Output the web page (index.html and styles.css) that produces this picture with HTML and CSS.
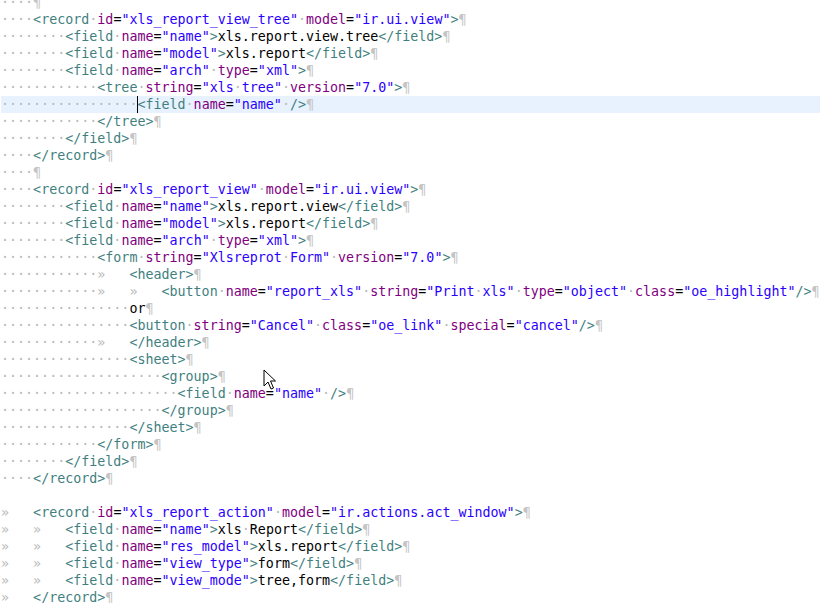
FILE: index.html
```html
<!DOCTYPE html>
<html>
<head>
<meta charset="utf-8">
<link rel="stylesheet" href="styles.css">
</head>
<body>
<div class="editor">
<div class="code">
<div class="ln"><span class="w">····</span><span class="p">¶</span></div>
<div class="ln"><span class="w">····</span><span class="t">&lt;record</span><span class="w">·</span><span class="a">id</span>=<span class="v">"xls_report_view_tree"</span><span class="w">·</span><span class="a">model</span>=<span class="v">"ir.ui.view"</span><span class="t">&gt;</span><span class="p">¶</span></div>
<div class="ln"><span class="w">········</span><span class="t">&lt;field</span><span class="w">·</span><span class="a">name</span>=<span class="v">"name"</span><span class="t">&gt;</span>xls.report.view.tree<span class="t">&lt;/field&gt;</span><span class="p">¶</span></div>
<div class="ln"><span class="w">········</span><span class="t">&lt;field</span><span class="w">·</span><span class="a">name</span>=<span class="v">"model"</span><span class="t">&gt;</span>xls.report<span class="t">&lt;/field&gt;</span><span class="p">¶</span></div>
<div class="ln"><span class="w">········</span><span class="t">&lt;field</span><span class="w">·</span><span class="a">name</span>=<span class="v">"arch"</span><span class="w">·</span><span class="a">type</span>=<span class="v">"xml"</span><span class="t">&gt;</span><span class="p">¶</span></div>
<div class="ln"><span class="w">············</span><span class="t">&lt;tree</span><span class="w">·</span><span class="a">string</span>=<span class="v">"xls<span class="w">·</span>tree"</span><span class="w">·</span><span class="a">version</span>=<span class="v">"7.0"</span><span class="t">&gt;</span><span class="p">¶</span></div>
<div class="ln cur"><span class="w">·················</span><span class="caret"></span><span class="t">&lt;field</span><span class="w">·</span><span class="a">name</span>=<span class="v">"name"</span><span class="w">·</span><span class="t">/&gt;</span><span class="p">¶</span></div>
<div class="ln"><span class="w">············</span><span class="t">&lt;/tree&gt;</span><span class="p">¶</span></div>
<div class="ln"><span class="w">········</span><span class="t">&lt;/field&gt;</span><span class="p">¶</span></div>
<div class="ln"><span class="w">····</span><span class="t">&lt;/record&gt;</span><span class="p">¶</span></div>
<div class="ln"><span class="w">····</span><span class="p">¶</span></div>
<div class="ln"><span class="w">····</span><span class="t">&lt;record</span><span class="w">·</span><span class="a">id</span>=<span class="v">"xls_report_view"</span><span class="w">·</span><span class="a">model</span>=<span class="v">"ir.ui.view"</span><span class="t">&gt;</span><span class="p">¶</span></div>
<div class="ln"><span class="w">········</span><span class="t">&lt;field</span><span class="w">·</span><span class="a">name</span>=<span class="v">"name"</span><span class="t">&gt;</span>xls.report.view<span class="t">&lt;/field&gt;</span><span class="p">¶</span></div>
<div class="ln"><span class="w">········</span><span class="t">&lt;field</span><span class="w">·</span><span class="a">name</span>=<span class="v">"model"</span><span class="t">&gt;</span>xls.report<span class="t">&lt;/field&gt;</span><span class="p">¶</span></div>
<div class="ln"><span class="w">········</span><span class="t">&lt;field</span><span class="w">·</span><span class="a">name</span>=<span class="v">"arch"</span><span class="w">·</span><span class="a">type</span>=<span class="v">"xml"</span><span class="t">&gt;</span><span class="p">¶</span></div>
<div class="ln"><span class="w">············</span><span class="t">&lt;form</span><span class="w">·</span><span class="a">string</span>=<span class="v">"Xlsreprot<span class="w">·</span>Form"</span><span class="w">·</span><span class="a">version</span>=<span class="v">"7.0"</span><span class="t">&gt;</span><span class="p">¶</span></div>
<div class="ln"><span class="w">············»   </span><span class="t">&lt;header&gt;</span><span class="p">¶</span></div>
<div class="ln"><span class="w">············»   »   </span><span class="t">&lt;button</span><span class="w">·</span><span class="a">name</span>=<span class="v">"report_xls"</span><span class="w">·</span><span class="a">string</span>=<span class="v">"Print<span class="w">·</span>xls"</span><span class="w">·</span><span class="a">type</span>=<span class="v">"object"</span><span class="w">·</span><span class="a">class</span>=<span class="v">"oe_highlight"</span><span class="t">/&gt;</span><span class="p">¶</span></div>
<div class="ln"><span class="w">················</span>or<span class="p">¶</span></div>
<div class="ln"><span class="w">················</span><span class="t">&lt;button</span><span class="w">·</span><span class="a">string</span>=<span class="v">"Cancel"</span><span class="w">·</span><span class="a">class</span>=<span class="v">"oe_link"</span><span class="w">·</span><span class="a">special</span>=<span class="v">"cancel"</span><span class="t">/&gt;</span><span class="p">¶</span></div>
<div class="ln"><span class="w">············»   </span><span class="t">&lt;/header&gt;</span><span class="p">¶</span></div>
<div class="ln"><span class="w">················</span><span class="t">&lt;sheet&gt;</span><span class="p">¶</span></div>
<div class="ln"><span class="w">····················</span><span class="t">&lt;group&gt;</span><span class="p">¶</span></div>
<div class="ln"><span class="w">······················</span><span class="t">&lt;field</span><span class="w">·</span><span class="a">name</span>=<span class="v">"name"</span><span class="w">·</span><span class="t">/&gt;</span><span class="p">¶</span></div>
<div class="ln"><span class="w">····················</span><span class="t">&lt;/group&gt;</span><span class="p">¶</span></div>
<div class="ln"><span class="w">················</span><span class="t">&lt;/sheet&gt;</span><span class="p">¶</span></div>
<div class="ln"><span class="w">············</span><span class="t">&lt;/form&gt;</span><span class="p">¶</span></div>
<div class="ln"><span class="w">········</span><span class="t">&lt;/field&gt;</span><span class="p">¶</span></div>
<div class="ln"><span class="w">····</span><span class="t">&lt;/record&gt;</span><span class="p">¶</span></div>
<div class="ln"> </div>
<div class="ln"><span class="w">»   </span><span class="t">&lt;record</span><span class="w">·</span><span class="a">id</span>=<span class="v">"xls_report_action"</span><span class="w">·</span><span class="a">model</span>=<span class="v">"ir.actions.act_window"</span><span class="t">&gt;</span><span class="p">¶</span></div>
<div class="ln"><span class="w">»   »   </span><span class="t">&lt;field</span><span class="w">·</span><span class="a">name</span>=<span class="v">"name"</span><span class="t">&gt;</span>xls<span class="w">·</span>Report<span class="t">&lt;/field&gt;</span><span class="p">¶</span></div>
<div class="ln"><span class="w">»   »   </span><span class="t">&lt;field</span><span class="w">·</span><span class="a">name</span>=<span class="v">"res_model"</span><span class="t">&gt;</span>xls.report<span class="t">&lt;/field&gt;</span><span class="p">¶</span></div>
<div class="ln"><span class="w">»   »   </span><span class="t">&lt;field</span><span class="w">·</span><span class="a">name</span>=<span class="v">"view_type"</span><span class="t">&gt;</span>form<span class="t">&lt;/field&gt;</span><span class="p">¶</span></div>
<div class="ln"><span class="w">»   »   </span><span class="t">&lt;field</span><span class="w">·</span><span class="a">name</span>=<span class="v">"view_mode"</span><span class="t">&gt;</span>tree,form<span class="t">&lt;/field&gt;</span><span class="p">¶</span></div>
<div class="ln"><span class="w">»   </span><span class="t">&lt;/record&gt;</span><span class="p">¶</span></div>
</div>
<svg class="pointer" width="14" height="22" viewBox="0 0 14 22"><path d="M1 1 L1 17 L5 13 L8 20 L10.5 19 L7.5 12 L12.5 12 Z" fill="#fff" stroke="#000" stroke-width="1" stroke-linejoin="miter"/></svg>
</div>
</body>
</html>
```

FILE: styles.css
```css
html, body {
  margin: 0;
  padding: 0;
  background: #ffffff;
  overflow: hidden;
}
.editor {
  position: relative;
  width: 820px;
  height: 603px;
  overflow: hidden;
  background: #ffffff;
}
.code {
  margin-top: -6px;
  padding-left: 1px;
  font-family: "DejaVu Sans Mono", monospace;
  font-size: 13.33px;
  line-height: 17px;
  color: #000000;
}
.ln {
  height: 17px;
  white-space: pre;
}
.ln.cur {
  background: #e8f2fe;
}
.t { color: #3f7f7f; }
.a { color: #7f007f; }
.v { color: #2a00ff; }
.w { color: #b8b8b8; }
.p { color: #c4c4c4; }
.caret {
  display: inline-block;
  width: 1px;
  height: 17px;
  margin-right: -1px;
  background: #000;
  vertical-align: top;
}
.pointer {
  position: absolute;
  left: 263px;
  top: 369px;
}
```
